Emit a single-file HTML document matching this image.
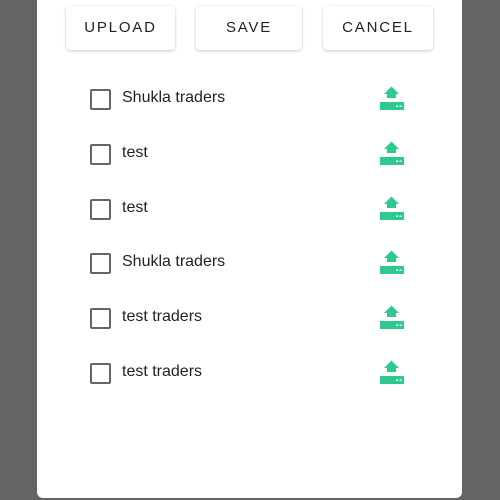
<!DOCTYPE html>
<html><head><style>
html,body{margin:0;padding:0;width:500px;height:500px;background:#646464;overflow:hidden;font-family:"Liberation Sans",sans-serif;}
.card{position:absolute;left:37px;top:-20px;width:425px;height:518px;background:#fff;border-radius:0 0 6px 6px;}
.btn{position:absolute;top:6px;height:44px;background:#fff;border-radius:4px;box-shadow:0 1px 3px rgba(0,0,0,0.2),0 0 1px rgba(0,0,0,0.1);font-size:15px;letter-spacing:1.8px;color:#222;text-align:center;line-height:44px;}
.row{position:absolute;left:0;width:500px;height:24px;}
.cb{position:absolute;left:90px;top:0;width:17px;height:17px;border:2px solid #666;border-radius:2px;}
.lbl{position:absolute;left:122px;top:0px;font-size:16px;color:#222;}
.ic{position:absolute;left:379px;top:-4px;}
</style></head><body>
<div class="card"></div>
<div class="btn" style="left:66px;width:109px;line-height:43px">UPLOAD</div>
<div class="btn" style="left:196px;width:106px;line-height:43px">SAVE</div>
<div class="btn" style="left:323px;width:110px;line-height:43px">CANCEL</div>

<div class="row" style="top:89px"><div class="cb"></div><div class="lbl">Shukla traders</div><svg class="ic" width="26" height="28" viewBox="0 0 26 28"><path d="M5 9 L12.5 1.5 L20 9 L17 9 L17 13 L8 13 L8 9 Z" fill="#2dc98f"/><rect x="1" y="17" width="24" height="8" fill="#2dc98f"/><rect x="17" y="20.5" width="2" height="1.5" fill="#fff"/><rect x="20.5" y="20.5" width="2" height="1.5" fill="#fff"/></svg></div>
<div class="row" style="top:144px"><div class="cb"></div><div class="lbl">test</div><svg class="ic" width="26" height="28" viewBox="0 0 26 28"><path d="M5 9 L12.5 1.5 L20 9 L17 9 L17 13 L8 13 L8 9 Z" fill="#2dc98f"/><rect x="1" y="17" width="24" height="8" fill="#2dc98f"/><rect x="17" y="20.5" width="2" height="1.5" fill="#fff"/><rect x="20.5" y="20.5" width="2" height="1.5" fill="#fff"/></svg></div>
<div class="row" style="top:199px"><div class="cb"></div><div class="lbl">test</div><svg class="ic" width="26" height="28" viewBox="0 0 26 28"><path d="M5 9 L12.5 1.5 L20 9 L17 9 L17 13 L8 13 L8 9 Z" fill="#2dc98f"/><rect x="1" y="17" width="24" height="8" fill="#2dc98f"/><rect x="17" y="20.5" width="2" height="1.5" fill="#fff"/><rect x="20.5" y="20.5" width="2" height="1.5" fill="#fff"/></svg></div>
<div class="row" style="top:253px"><div class="cb"></div><div class="lbl">Shukla traders</div><svg class="ic" width="26" height="28" viewBox="0 0 26 28"><path d="M5 9 L12.5 1.5 L20 9 L17 9 L17 13 L8 13 L8 9 Z" fill="#2dc98f"/><rect x="1" y="17" width="24" height="8" fill="#2dc98f"/><rect x="17" y="20.5" width="2" height="1.5" fill="#fff"/><rect x="20.5" y="20.5" width="2" height="1.5" fill="#fff"/></svg></div>
<div class="row" style="top:308px"><div class="cb"></div><div class="lbl">test traders</div><svg class="ic" width="26" height="28" viewBox="0 0 26 28"><path d="M5 9 L12.5 1.5 L20 9 L17 9 L17 13 L8 13 L8 9 Z" fill="#2dc98f"/><rect x="1" y="17" width="24" height="8" fill="#2dc98f"/><rect x="17" y="20.5" width="2" height="1.5" fill="#fff"/><rect x="20.5" y="20.5" width="2" height="1.5" fill="#fff"/></svg></div>
<div class="row" style="top:363px"><div class="cb"></div><div class="lbl">test traders</div><svg class="ic" width="26" height="28" viewBox="0 0 26 28"><path d="M5 9 L12.5 1.5 L20 9 L17 9 L17 13 L8 13 L8 9 Z" fill="#2dc98f"/><rect x="1" y="17" width="24" height="8" fill="#2dc98f"/><rect x="17" y="20.5" width="2" height="1.5" fill="#fff"/><rect x="20.5" y="20.5" width="2" height="1.5" fill="#fff"/></svg></div>
</body></html>
